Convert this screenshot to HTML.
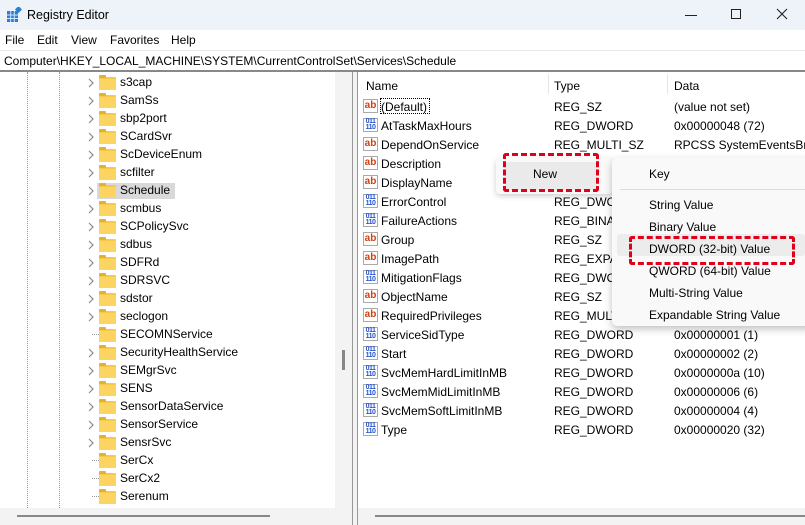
<!DOCTYPE html><html><head><style>
*{margin:0;padding:0;box-sizing:border-box}
body{width:805px;height:525px;overflow:hidden;background:#f3f3f3;font-family:"Liberation Sans",sans-serif;font-size:12px;color:#000;position:relative}
.a{position:absolute;white-space:nowrap}
.fold{position:absolute;width:17px;height:13px;background:#f7c948;border-radius:1px}
.fold:before{content:"";position:absolute;left:0;top:-2px;width:7px;height:3px;background:#e8b030;border-radius:1px 1px 0 0}
.fold:after{content:"";position:absolute;left:0;top:2px;width:17px;height:11px;background:#fcd462}
.ch{position:absolute}
.ab{position:absolute;width:15px;height:14px;border:1px solid #aaa;background:#fff;color:#d04010;font-weight:bold;font-size:10px;line-height:11px;text-align:center}
.bi{position:absolute;width:15px;height:14px;border:1px solid #aaa;background:#fff;color:#2050d0;font-weight:bold;font-size:7px;line-height:6px;text-align:center;letter-spacing:-0.5px}
</style></head><body>
<div class="a" style="left:0;top:0;width:805px;height:30px;background:#eef3fa"></div>
<svg class="a" style="left:6px;top:7px" width="16" height="16"><rect x="1" y="4" width="11" height="11" fill="#2a7fd4"/><path d="M1 8h11M1 11.5h11M4.7 4v11M8.3 4v11" stroke="#cfe6fb" stroke-width="1"/><rect x="10" y="0" width="5" height="5" fill="#2a7fd4" transform="rotate(45 12.5 2.5)"/></svg>
<div class="a" style="left:27px;top:8px;font-size:12.5px">Registry Editor</div>
<svg class="a" style="left:684px;top:8px" width="110" height="16"><path d="M1 7.5h12" stroke="#222" stroke-width="1"/><rect x="47.5" y="1.5" width="9" height="9" fill="none" stroke="#222"/><path d="M93 1l10 10M103 1l-10 10" stroke="#222" stroke-width="1.1"/></svg>
<div class="a" style="left:0;top:30px;width:805px;height:20px;background:#fff"></div>
<div class="a" style="left:5px;top:33px">File</div><div class="a" style="left:37px;top:33px">Edit</div><div class="a" style="left:71px;top:33px">View</div><div class="a" style="left:110px;top:33px">Favorites</div><div class="a" style="left:171px;top:33px">Help</div>
<div class="a" style="left:0;top:50px;width:805px;height:20px;background:#fff;border-top:1px solid #e8e8e8"></div>
<div class="a" style="left:4px;top:54px">Computer\HKEY_LOCAL_MACHINE\SYSTEM\CurrentControlSet\Services\Schedule</div>
<div class="a" style="left:0;top:70px;width:805px;height:2px;background:#888"></div>
<div class="a" style="left:0;top:72px;width:335px;height:436px;background:#fff"></div>
<div class="a" style="left:342px;top:350px;width:3px;height:20px;background:#888"></div>
<div class="a" style="left:352px;top:72px;width:1px;height:453px;background:#999"></div>
<div class="a" style="left:357px;top:72px;width:1px;height:453px;background:#999"></div>
<div class="a" style="left:358px;top:72px;width:447px;height:436px;background:#fff"></div>
<div class="a" style="left:17px;top:515px;width:253px;height:2px;background:#888"></div>
<div class="a" style="left:375px;top:515px;width:430px;height:2px;background:#888"></div>
<div class="a" style="left:27px;top:72px;height:436px;border-left:1px dotted #999"></div>
<div class="a" style="left:59px;top:72px;height:436px;border-left:1px dotted #999"></div>
<div class="a" style="left:97px;top:183px;width:78px;height:16px;background:#d9d9d9"></div>
<div id="tree"></div>
<div class="a" style="left:366px;top:79px">Name</div><div class="a" style="left:554px;top:79px">Type</div><div class="a" style="left:674px;top:79px">Data</div>
<div class="a" style="left:548px;top:74px;width:1px;height:20px;background:#e5e5e5"></div><div class="a" style="left:667px;top:74px;width:1px;height:20px;background:#e5e5e5"></div>
<div id="vals"></div>
<div class="a" style="left:380px;top:98px;width:50px;height:16px;border:1px dotted #000"></div>
<div class="a" style="left:496px;top:158px;width:116px;height:36px;background:#f9f9f9;border-radius:4px;box-shadow:0 2px 6px rgba(0,0,0,.2)"></div>
<div class="a" style="left:505px;top:162px;width:92px;height:28px;background:#eaeaea;border-radius:3px"></div>
<div class="a" style="left:533px;top:167px">New</div><div class="a" style="left:596px;top:166px;font-size:11px">›</div>
<div class="a" style="left:503px;top:153px;width:96px;height:39px;border:3px dashed #e0001a;border-radius:3px"></div>
<div class="a" style="left:612px;top:158px;width:200px;height:168px;background:#f9f9f9;border-radius:5px;box-shadow:0 3px 8px rgba(0,0,0,.25)"></div>
<div class="a" style="left:620px;top:189px;width:185px;height:1px;background:#ddd"></div>
<div class="a" style="left:617px;top:234px;width:188px;height:22px;background:#ececec;border-radius:3px"></div>
<div class="a" style="left:649px;top:167px">Key</div>
<div class="a" style="left:649px;top:198px">String Value</div>
<div class="a" style="left:649px;top:220px">Binary Value</div>
<div class="a" style="left:649px;top:242px">DWORD (32-bit) Value</div>
<div class="a" style="left:649px;top:264px">QWORD (64-bit) Value</div>
<div class="a" style="left:649px;top:286px">Multi-String Value</div>
<div class="a" style="left:649px;top:308px">Expandable String Value</div>
<div class="a" style="left:629px;top:236px;width:166px;height:29px;border:3px dashed #e0001a;border-radius:3px"></div>
<script>
var t=[["s3cap",1],["SamSs",1],["sbp2port",1],["SCardSvr",1],["ScDeviceEnum",1],["scfilter",1],["Schedule",1],["scmbus",1],["SCPolicySvc",1],["sdbus",1],["SDFRd",1],["SDRSVC",1],["sdstor",1],["seclogon",1],["SECOMNService",0],["SecurityHealthService",1],["SEMgrSvc",1],["SENS",1],["SensorDataService",1],["SensorService",1],["SensrSvc",1],["SerCx",0],["SerCx2",0],["Serenum",0]];
var h="";t.forEach(function(r,i){var y=74+i*18;
h+=r[1]?'<svg class="ch" style="left:88px;top:'+(y+4)+'px" width="6" height="10"><path d="M1 1l4 4-4 4" fill="none" stroke="#888" stroke-width="1.2"/></svg>':'<div class="a" style="left:92px;top:'+(y+8)+'px;width:7px;border-top:1px dotted #999"></div>';
h+='<div class="fold" style="left:99px;top:'+(y+3)+'px"></div><div class="a" style="left:120px;top:'+(y+1)+'px">'+r[0]+'</div>';});
document.getElementById("tree").innerHTML=h;
var v=[["(Default)",0,"REG_SZ","(value not set)"],["AtTaskMaxHours",1,"REG_DWORD","0x00000048 (72)"],["DependOnService",0,"REG_MULTI_SZ","RPCSS SystemEventsBrol"],["Description",0,"",""],["DisplayName",0,"",""],["ErrorControl",1,"REG_DWORD",""],["FailureActions",1,"REG_BINARY",""],["Group",0,"REG_SZ",""],["ImagePath",0,"REG_EXPAND",""],["MitigationFlags",1,"REG_DWORD",""],["ObjectName",0,"REG_SZ",""],["RequiredPrivileges",0,"REG_MULTI",""],["ServiceSidType",1,"REG_DWORD","0x00000001 (1)"],["Start",1,"REG_DWORD","0x00000002 (2)"],["SvcMemHardLimitInMB",1,"REG_DWORD","0x0000000a (10)"],["SvcMemMidLimitInMB",1,"REG_DWORD","0x00000006 (6)"],["SvcMemSoftLimitInMB",1,"REG_DWORD","0x00000004 (4)"],["Type",1,"REG_DWORD","0x00000020 (32)"]];
h="";v.forEach(function(r,i){var y=98+i*19;
h+=r[1]?'<div class="bi" style="left:363px;top:'+(y+1)+'px">011<br>110</div>':'<div class="ab" style="left:363px;top:'+(y+1)+'px">ab</div>';
h+='<div class="a" style="left:381px;top:'+(y+2)+'px">'+r[0]+'</div><div class="a" style="left:554px;top:'+(y+2)+'px">'+r[2]+'</div><div class="a" style="left:674px;top:'+(y+2)+'px">'+r[3]+'</div>';});
document.getElementById("vals").innerHTML=h;
</script>
</body></html>
